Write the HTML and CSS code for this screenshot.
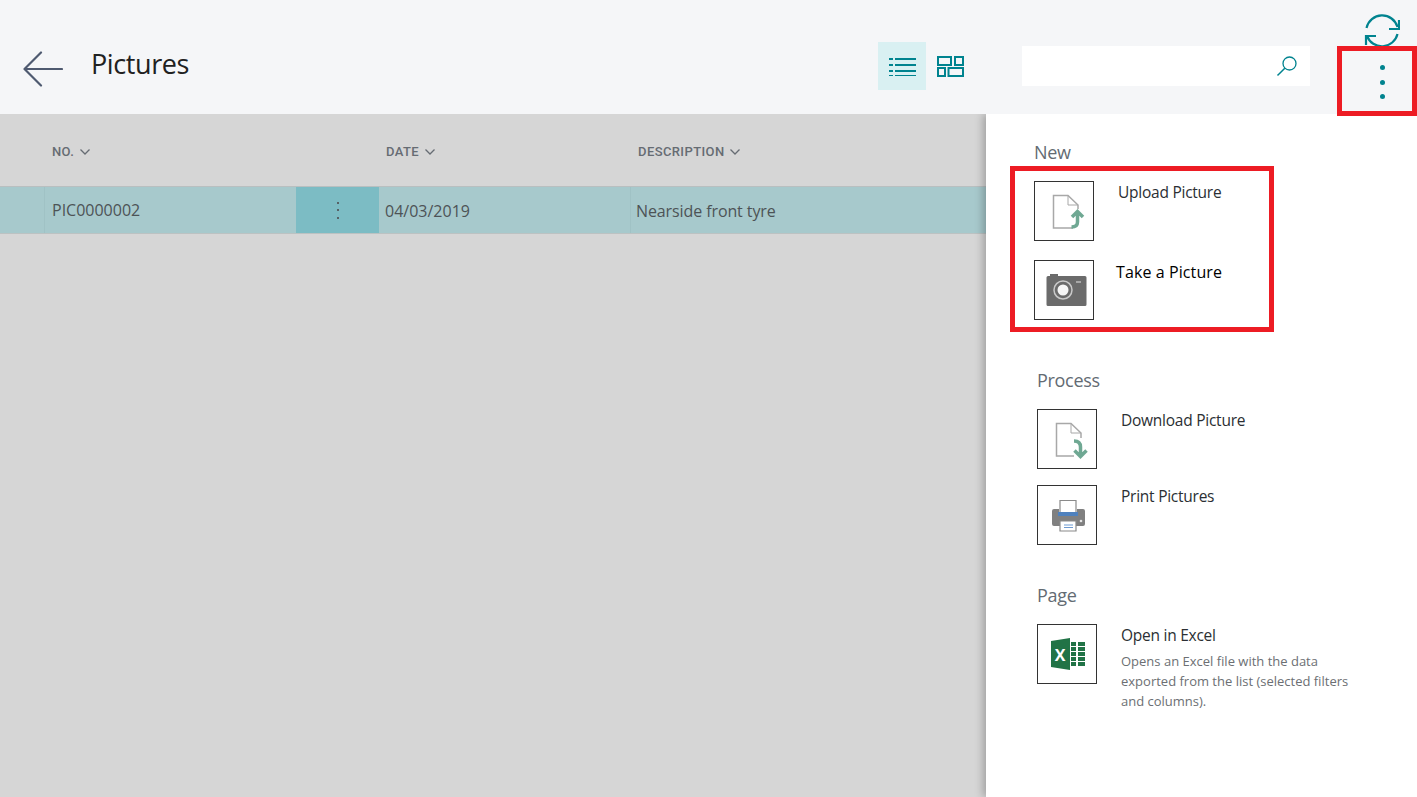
FILE: index.html
```html
<!DOCTYPE html>
<html lang="en">
<head>
    <meta charset="UTF-8">
    <meta name="viewport" content="width=device-width, initial-scale=1.0">
    <title>Pictures</title>
    <link rel="stylesheet" href="styles.css">
</head>
<body>
    <header class="topbar">
        <svg class="back-icon" width="40" height="36" viewBox="0 0 40 36"><path d="M18 1.500 1.500 18 18 34.500M1.500 18H39" fill="none" stroke="#4f5a70" stroke-width="2.200" stroke-linecap="round" stroke-linejoin="round"/></svg>
        <h1 class="page-title">Pictures</h1>
        <div class="view-toggle">
            <button class="view-btn active">
                <svg width="27" height="20" viewBox="0 0 27 20"><path d="M0 3h4M6 3h21M0 9h4M6 9h21M0 15h4M6 15h21M0 20h4M6 20h21" fill="none" stroke="#00838f" stroke-width="2"/></svg>
            </button>
            <button class="view-btn">
                <svg width="27" height="21" viewBox="0 0 27 21"><path d="M1 1h13v8H1zM18 1h8v8h-8zM1 12h7v8H1zM11.500 12H26v8H11.500z" fill="none" stroke="#00838f" stroke-width="2"/></svg>
            </button>
        </div>
        <div class="search-box">
            <svg width="22" height="22" viewBox="0 0 22 22"><circle cx="13.500" cy="8.500" r="6.500" fill="none" stroke="#00838f" stroke-width="1.300"/><path d="M8.800 13.200 1.500 20.500" fill="none" stroke="#00838f" stroke-width="1.500"/></svg>
        </div>
        <div class="top-actions">
            <svg class="refresh-icon" width="36" height="36" viewBox="0 0 36 36"><path d="M2.500 15A16 16 0 0 1 33.500 14M33.500 21A16 16 0 0 1 3 23" fill="none" stroke="#00838f" stroke-width="2.200"/><path d="M35 7v9H25M2 32v-9h10" fill="none" stroke="#00838f" stroke-width="2.200"/></svg>
            <button class="more-btn"><span></span><span></span><span></span></button>
        </div>
    </header>

    <main class="content">
        <section class="list">
            <div class="grid-row head-row">
                <div class="col-no">NO. <svg width="10" height="6" viewBox="0 0 10 6"><path d="M.5.500 5 5 9.500.500" fill="none" stroke="#666c73" stroke-width="1.300"/></svg></div>
                <div class="col-date">DATE <svg width="10" height="6" viewBox="0 0 10 6"><path d="M.5.500 5 5 9.500.500" fill="none" stroke="#666c73" stroke-width="1.300"/></svg></div>
                <div class="col-desc">DESCRIPTION <svg width="10" height="6" viewBox="0 0 10 6"><path d="M.5.500 5 5 9.500.500" fill="none" stroke="#666c73" stroke-width="1.300"/></svg></div>
            </div>
            <div class="grid-row data-row">
                <div class="cell-check"></div>
                <div class="cell-no">PIC0000002</div>
                <div class="cell-menu"><span></span><span></span><span></span></div>
                <div class="cell-date">04/03/2019</div>
                <div class="cell-desc">Nearside front tyre</div>
            </div>
        </section>

        <aside class="panel">
            <div class="section section-new">
                <h2>New</h2>
                <div class="actions tight">
                    <div class="action">
                        <div class="icon-box">
                            <svg width="58" height="58" viewBox="0 0 58 58"><path d="M38 46H18.500V13.500H33L43 23v4" fill="none" stroke="#a8a8a8" stroke-width="1.500"/><path d="M33 13.500V23h10" fill="none" stroke="#a8a8a8" stroke-width="1"/><path d="M37 35l5.500-5.500L48 35M42.500 30v10q0 5-6 5" fill="none" stroke="#6fa893" stroke-width="3.500"/></svg>
                        </div>
                        <div class="action-text"><h3>Upload Picture</h3></div>
                    </div>
                    <div class="action pasted">
                        <div class="icon-box">
                            <svg width="58" height="58" viewBox="0 0 58 58"><path d="M13 15h2v-2h8v2h27a1.500 1.500 0 0 1 1.500 1.500v27a1.500 1.500 0 0 1-1.500 1.500H13a1.500 1.500 0 0 1-1.500-1.500v-27A1.500 1.500 0 0 1 13 15z" fill="#6b6b6b"/><path d="M41 21h5" stroke="#d0d0d0" stroke-width="1.200"/><circle cx="28" cy="29" r="9" fill="none" stroke="#c9c9c9" stroke-width="1.500"/><circle cx="28" cy="29" r="5.500" fill="#f6f6f6"/></svg>
                        </div>
                        <div class="action-text"><h3>Take a Picture</h3></div>
                    </div>
                </div>
            </div>

            <div class="section section-process">
                <h2>Process</h2>
                <div class="actions">
                    <div class="action">
                        <div class="icon-box">
                            <svg width="58" height="58" viewBox="0 0 58 58"><path d="M36 46H18.500V13.500H33L43 23v5" fill="none" stroke="#a8a8a8" stroke-width="1.500"/><path d="M33 13.500V23h10" fill="none" stroke="#a8a8a8" stroke-width="1"/><path d="M36 31q6.500 0 6.500 6v9M36.500 40.500l6 6 6-6" fill="none" stroke="#6fa893" stroke-width="3.500"/></svg>
                        </div>
                        <div class="action-text"><h3>Download Picture</h3></div>
                    </div>
                    <div class="action">
                        <div class="icon-box">
                            <svg width="58" height="58" viewBox="0 0 58 58"><path d="M22 14.500h16V28H22z" fill="#fff" stroke="#8a8a8a" stroke-width="1.200"/><path d="M16 23h5v5h18v-5h6a2 2 0 0 1 2 2v13a2 2 0 0 1-2 2H16a2 2 0 0 1-2-2V25a2 2 0 0 1 2-2z" fill="#808080"/><path d="M20 26h20v4H20z" fill="#4f81bd"/><circle cx="43" cy="35" r="1.300" fill="#e4e4e4"/><path d="M22 35h16v10H22z" fill="#fff" stroke="#8a8a8a" stroke-width="1.200"/><path d="M26 39h9M26 41.500h9" stroke="#6f9bd1" stroke-width="1.200"/></svg>
                        </div>
                        <div class="action-text"><h3>Print Pictures</h3></div>
                    </div>
                </div>
            </div>

            <div class="section section-page">
                <h2>Page</h2>
                <div class="actions">
                    <div class="action">
                        <div class="icon-box">
                            <svg width="58" height="58" viewBox="0 0 58 58"><path d="M33 17h5v4h-5zM40 17h7v4h-7zM33 22h5v4h-5zM40 22h7v4h-7zM33 27h5v4h-5zM40 27h7v4h-7zM33 32h5v4h-5zM40 32h7v4h-7zM33 37h5v4h-5zM40 37h7v4h-7z" fill="#217346"/><path d="M13 16 32 13v32l-19-3z" fill="#217346"/><text class="xl-mark" x="22" y="35.500" text-anchor="middle">X</text></svg>
                        </div>
                        <div class="action-text">
                            <h3>Open in Excel</h3>
                            <p>Opens an Excel file with the data exported from the list (selected filters and columns).</p>
                        </div>
                    </div>
                </div>
            </div>
        </aside>
    </main>

    <!-- red annotation boxes drawn over the screenshot -->
    <div class="callout callout-more"></div>
    <div class="callout callout-new"></div>
</body>
</html>
```

FILE: styles.css
```css
* {
    box-sizing: border-box;
}

html, body {
    height: 100%;
}

body {
    margin: 0;
    background-color: #d6d6d6;
    font-family: "Open Sans", "Noto Sans", sans-serif;
    overflow: hidden;
    display: flex;
    flex-direction: column;
}

button {
    border: 0;
    padding: 0;
    background-color: transparent;
}

.topbar {
    height: 114px;
    flex: none;
    display: flex;
    align-items: flex-start;
    background-color: #f5f6f8;
}

.back-icon {
    margin: 51px 0 0 23px;
}

.page-title {
    margin: 44px 0 0 28px;
    width: 787px;
    font-size: 27px;
    line-height: 40px;
    font-weight: 400;
    color: #212121;
    letter-spacing: -0.4px;
}

.view-toggle {
    margin-top: 42px;
    display: flex;
}

.view-btn {
    width: 48px;
    height: 48px;
    display: flex;
    align-items: center;
    justify-content: center;
}

.view-btn.active {
    background-color: #d9f0f2;
}

.search-box {
    margin: 46px 0 0 48px;
    width: 288px;
    height: 40px;
    padding-right: 12px;
    background-color: #fff;
    display: flex;
    align-items: center;
    justify-content: flex-end;
}

.top-actions {
    margin-left: 28px;
    width: 79px;
    padding-left: 9px;
    display: flex;
    flex-direction: column;
    align-items: center;
}

.refresh-icon {
    margin-top: 13px;
}

.more-btn {
    margin-top: 16px;
    display: flex;
    flex-direction: column;
    gap: 9.500px;
    align-items: center;
}

.more-btn span {
    width: 5px;
    height: 5px;
    border-radius: 50%;
    background-color: #00838f;
}

.content {
    flex: 1;
    display: flex;
    min-height: 0;
    overflow: hidden;
}

.list {
    flex: 1;
}

.grid-row {
    display: grid;
    grid-template-columns: 45px 251px 83px 251px 1fr;
}

.head-row {
    height: 72px;
    padding-top: 3px;
    align-items: center;
    font-family: Roboto, "Open Sans", sans-serif;
    font-size: 13px;
    font-weight: 500;
    letter-spacing: 0.4px;
    color: #666c73;
}

.head-row svg {
    margin-left: 2px;
    vertical-align: 1px;
}

.col-no {
    grid-column: 1 / 4;
    padding-left: 52px;
}

.col-date {
    padding-left: 7px;
    grid-column: 4;
}

.col-desc {
    padding-left: 8px;
    grid-column: 5;
}

.data-row {
    height: 48px;
    grid-template-rows: 46px;
    background-color: #a7c9cc;
    border-top: 1px solid #b9bfc0;
    border-bottom: 1px solid #bcc2c2;
    align-items: stretch;
    font-size: 16px;
    line-height: 47px;
    color: #4d5356;
}

.cell-check {
    border-right: 1px solid #a0c2c5;
}

.cell-no {
    padding-left: 7px;
}

.cell-menu {
    background-color: #7cbcc4;
    display: flex;
    flex-direction: column;
    gap: 5.500px;
    align-items: center;
    justify-content: center;
}

.cell-menu span {
    width: 2px;
    height: 2px;
    background-color: #566266;
}

.cell-date {
    padding: 1px 0 0 6px;
}

.cell-desc {
    padding: 1px 0 0 5px;
    border-left: 1px solid #a0c2c5;
    letter-spacing: -0.1px;
}

.panel {
    width: 431px;
    flex: none;
    padding-top: 26px;
    background-color: #fff;
    box-shadow: -3px 0 8px rgba(0, 0, 0, 0.25);
}

.section h2 {
    margin: 0 0 17px;
    font-size: 18px;
    line-height: 24px;
    font-weight: 400;
    letter-spacing: -0.3px;
    color: #636b73;
}

.section-new {
    padding-left: 48px;
}

.section-process {
    margin-top: 48px;
    padding-left: 51px;
}

.section-page {
    margin-top: 38px;
    padding-left: 51px;
}

.actions {
    display: flex;
    flex-direction: column;
    gap: 16px;
}

.actions.tight {
    gap: 19px;
}

.action {
    display: flex;
    gap: 24px;
}

.icon-box {
    width: 60px;
    height: 60px;
    flex: none;
    border: 1px solid #333;
    background-color: #fff;
}

.icon-box svg {
    display: block;
}

.xl-mark {
    font-family: "Open Sans", sans-serif;
    font-size: 16px;
    font-weight: 700;
    fill: #fff;
}

.action-text {
    width: 240px;
}

.action h3 {
    margin: 0;
    font-size: 15.500px;
    line-height: 22px;
    font-weight: 400;
    letter-spacing: -0.25px;
    color: #2b2f33;
}

.action.pasted {
    gap: 22px;
}

.action.pasted h3 {
    margin-top: 1px;
    font-size: 16px;
    letter-spacing: 0.1px;
    color: #000;
}

.action p {
    margin: 5px 0 0;
    font-size: 13px;
    line-height: 20px;
    color: #6c6f73;
}

.callout {
    position: absolute;
    border: 5px solid #ed1c24;
}

.callout-more {
    left: 1337px;
    top: 46px;
    width: 80px;
    height: 70px;
}

.callout-new {
    left: 1010px;
    top: 166px;
    width: 264px;
    height: 166px;
}
```
